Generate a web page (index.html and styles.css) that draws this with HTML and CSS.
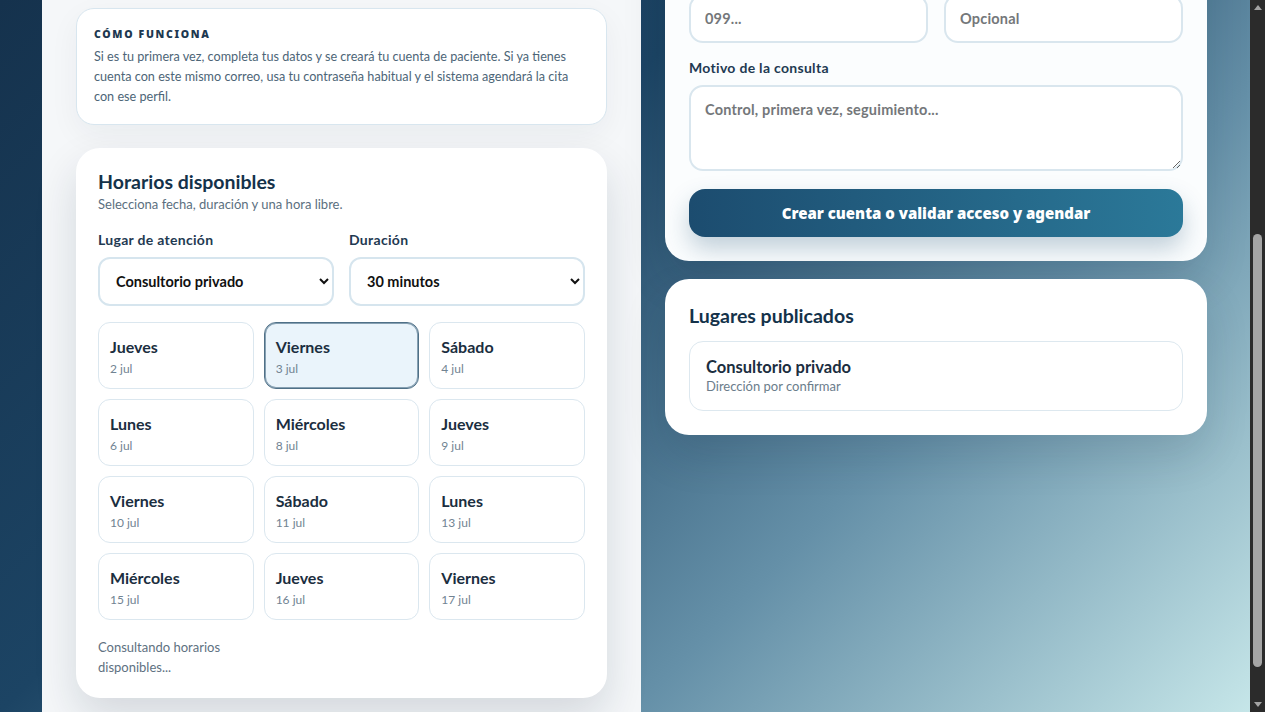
FILE: index.html
```html
<!DOCTYPE html>
<html lang="es">
<head>
<meta charset="utf-8">
<title>Agenda tu consulta</title>
<link rel="stylesheet" href="styles.css">
</head>
<body>
<div class="page" id="page">
<main class="layout">
  <section class="panel">
    <header class="intro">
      <span class="badge">Agenda en línea</span>
      <h1 class="intro-title">Dra. Valentina Suárez</h1>
      <p class="intro-specialty">Medicina general · Montevideo</p>
      <p class="intro-text">Reserva tu consulta en pocos pasos: elige el lugar, la fecha y el horario que mejor te quede.</p>
      <ul class="facts">
        <li class="fact"><strong class="fact-value">30 min</strong><span class="fact-label">Duración habitual</span></li>
        <li class="fact"><strong class="fact-value">1</strong><span class="fact-label">Lugar de atención</span></li>
        <li class="fact"><strong class="fact-value">Online</strong><span class="fact-label">Confirmación</span></li>
      </ul>
      <p class="intro-contact">Atención de lunes a sábado.</p>
    </header>

    <article class="how">
      <h3 class="how-title">Cómo funciona</h3>
      <p class="how-text">Si es tu primera vez, completa tus datos y se creará tu cuenta de paciente. Si ya tienes cuenta con este mismo correo, usa tu contraseña habitual y el sistema agendará la cita con ese perfil.</p>
    </article>

    <article class="card schedule">
      <h2 class="card-title">Horarios disponibles</h2>
      <p class="card-sub">Selecciona fecha, duración y una hora libre.</p>
      <div class="filters">
        <label class="field">
          <span class="field-label">Lugar de atención</span>
          <select class="select"><option>Consultorio privado</option></select>
        </label>
        <label class="field">
          <span class="field-label">Duración</span>
          <select class="select"><option>30 minutos</option><option>45 minutos</option><option>60 minutos</option></select>
        </label>
      </div>
      <div class="days">
        <button class="day" type="button"><span class="day-name">Jueves</span><span class="day-date">2 jul</span></button>
        <button class="day is-selected" type="button"><span class="day-name">Viernes</span><span class="day-date">3 jul</span></button>
        <button class="day" type="button"><span class="day-name">Sábado</span><span class="day-date">4 jul</span></button>
        <button class="day" type="button"><span class="day-name">Lunes</span><span class="day-date">6 jul</span></button>
        <button class="day" type="button"><span class="day-name">Miércoles</span><span class="day-date">8 jul</span></button>
        <button class="day" type="button"><span class="day-name">Jueves</span><span class="day-date">9 jul</span></button>
        <button class="day" type="button"><span class="day-name">Viernes</span><span class="day-date">10 jul</span></button>
        <button class="day" type="button"><span class="day-name">Sábado</span><span class="day-date">11 jul</span></button>
        <button class="day" type="button"><span class="day-name">Lunes</span><span class="day-date">13 jul</span></button>
        <button class="day" type="button"><span class="day-name">Miércoles</span><span class="day-date">15 jul</span></button>
        <button class="day" type="button"><span class="day-name">Jueves</span><span class="day-date">16 jul</span></button>
        <button class="day" type="button"><span class="day-name">Viernes</span><span class="day-date">17 jul</span></button>
      </div>
      <div class="slots">
        <p class="status">Consultando horarios disponibles...</p>
      </div>
    </article>
  </section>

  <aside class="side">
    <form class="card booking">
      <header class="booking-head">
        <h2 class="card-title">Tus datos</h2>
        <p class="card-sub">Completa el formulario para reservar la hora elegida.</p>
        <p class="booking-note">Los datos se guardan en tu ficha de paciente.</p>
      </header>
      <div class="row">
        <label class="field"><span class="field-label">Nombre</span><input class="input" type="text" placeholder="Tu nombre"></label>
        <label class="field"><span class="field-label">Apellido</span><input class="input" type="text" placeholder="Tu apellido"></label>
      </div>
      <div class="row">
        <label class="field"><span class="field-label">Correo electrónico</span><input class="input" type="email" placeholder="nombre@correo.com"></label>
        <label class="field"><span class="field-label">Contraseña</span><input class="input" type="password" placeholder="Mínimo 8 caracteres"></label>
      </div>
      <div class="row">
        <label class="field"><span class="field-label">Teléfono</span><input class="input" type="tel" placeholder="099..."></label>
        <label class="field"><span class="field-label">Mutualista</span><input class="input" type="text" placeholder="Opcional"></label>
      </div>
      <label class="field">
        <span class="field-label">Motivo de la consulta</span>
        <textarea class="textarea" placeholder="Control, primera vez, seguimiento..."></textarea>
      </label>
      <button class="submit" type="button">Crear cuenta o validar acceso y agendar</button>
    </form>

    <section class="card places">
      <h2 class="card-title">Lugares publicados</h2>
      <div class="place">
        <strong class="place-name">Consultorio privado</strong>
        <span class="place-address">Dirección por confirmar</span>
      </div>
    </section>
  </aside>
</main>
</div>

<div class="scrollbar" aria-hidden="true">
  <span class="scrollbar-arrow is-up"></span>
  <div class="scrollbar-track" id="track"><span class="scrollbar-thumb" id="thumb"></span></div>
  <span class="scrollbar-arrow is-down"></span>
</div>
<script src="script.js"></script>
</body>
</html>
```

FILE: styles.css
```css
* {
  box-sizing: border-box;
}

html,
body {
  height: 100%;
}

body {
  margin: 0;
  overflow: hidden;
  display: flex;
  font-family: Lato, "Noto Sans", sans-serif;
  color: #17324a;
  background: linear-gradient(135deg, #15324d 0%, #1c4464 36%, #6590a8 68%, #c8e8ea 100%) fixed;
}

/* Scrolling area; its position is shown by the custom bar on the right */
.page {
  flex: 1;
  min-width: 0;
  height: 100%;
  overflow-y: scroll;
  scrollbar-width: none;
}

.scrollbar {
  flex: 0 0 15px;
  height: 100%;
  background: #2b2b2b;
  display: flex;
  flex-direction: column;
}

.scrollbar-arrow {
  flex: 0 0 15px;
  display: flex;
  align-items: center;
  justify-content: center;
}

.scrollbar-arrow::before {
  content: "";
  border-left: 4px solid transparent;
  border-right: 4px solid transparent;
}

.scrollbar-arrow.is-up::before {
  border-bottom: 5px solid #a3a3a3;
}

.scrollbar-arrow.is-down::before {
  border-top: 5px solid #a3a3a3;
}

.scrollbar-track {
  flex: 1;
  min-height: 0;
}

.scrollbar-thumb {
  display: block;
  width: 9px;
  height: 40px;
  margin: 0 auto;
  border-radius: 5px;
  background: #a5a5a5;
}

.layout {
  width: 1166px;
  margin: 0 auto;
  padding-bottom: 30px;
  display: grid;
  grid-template-columns: 599px 542px;
  gap: 24px;
  align-items: start;
}

/* Left column */
.panel {
  background: #f5f7f9;
  padding: 34px;
  display: flex;
  flex-direction: column;
  gap: 23px;
}

.intro {
  display: flex;
  flex-direction: column;
  align-items: flex-start;
}

.badge {
  height: 28px;
  line-height: 28px;
  padding: 0 12px;
  border-radius: 999px;
  background: #e3eff6;
  color: #1d4e70;
  font-size: 12px;
  font-weight: 700;
  margin-bottom: 24px;
}

.intro-title {
  margin: 0 0 8px;
  font-size: 30px;
  line-height: 38px;
  color: #14324a;
}

.intro-specialty {
  margin: 0 0 18px;
  font-size: 15px;
  line-height: 22px;
  color: #3e5a70;
  font-weight: 700;
}

.intro-text {
  margin: 0 0 26px;
  font-size: 14px;
  line-height: 22px;
  color: #4d6577;
}

.facts {
  list-style: none;
  margin: 0;
  padding: 0;
  align-self: stretch;
  display: grid;
  grid-template-columns: repeat(3, 1fr);
  gap: 10px;
}

.fact {
  background: #fff;
  border: 1px solid #dbe7ef;
  border-radius: 14px;
  padding: 18px 14px;
  display: flex;
  flex-direction: column;
}

.fact-value {
  font-size: 18px;
  line-height: 24px;
  color: #14324a;
}

.fact-label {
  font-size: 12px;
  line-height: 18px;
  color: #6b7d8b;
}

.intro-contact {
  margin: 5px 0 0;
  font-size: 12px;
  line-height: 18px;
  color: #6b7d8b;
}

.how {
  background: #fff;
  border: 1px solid #d8e6ef;
  border-radius: 18px;
  padding: 18px 17px 17px;
  box-shadow: 0 10px 30px rgba(15, 40, 65, 0.05);
}

.how-title {
  margin: 0 0 6px;
  font-family: "Noto Sans", Lato, sans-serif;
  font-size: 10.5px;
  line-height: 14px;
  font-weight: 900;
  letter-spacing: 0.16em;
  text-transform: uppercase;
  color: #1d3850;
}

.how-text {
  margin: 0;
  font-size: 12.65px;
  line-height: 20px;
  color: #4d6577;
}

/* Cards */
.card {
  background: #fff;
  border-radius: 24px;
  padding: 24px;
  box-shadow: 0 20px 44px rgba(12, 34, 56, 0.14);
}

.card-title {
  margin: 0;
  font-size: 19.5px;
  line-height: 26px;
  font-weight: 700;
  color: #14324a;
}

.card-sub {
  margin: 0;
  font-size: 13px;
  line-height: 18px;
  color: #5b6f80;
}

.schedule {
  padding: 21px 22px 21px;
}

.filters {
  margin-top: 18px;
  display: grid;
  grid-template-columns: 1fr 1fr;
  gap: 15px;
}

.field {
  display: flex;
  flex-direction: column;
  gap: 8px;
}

.field-label {
  font-size: 14px;
  line-height: 18px;
  font-weight: 700;
  letter-spacing: 0.3px;
  color: #1f3a52;
}

.select {
  height: 49px;
  border: 2px solid #d6e5ee;
  border-radius: 12px;
  padding: 0 10px 0 12px;
  background-color: #fff;
  font-family: inherit;
  font-size: 14.5px;
  font-weight: 700;
  color: #111;
}

.days {
  margin-top: 16px;
  display: grid;
  grid-template-columns: repeat(3, 1fr);
  gap: 10px;
}

.day {
  display: flex;
  flex-direction: column;
  align-items: flex-start;
  gap: 3px;
  padding: 14px 11px 10px;
  border: 1px solid #dbe7ef;
  border-radius: 12px;
  background: #fff;
  font-family: inherit;
  text-align: left;
  cursor: pointer;
}

.day.is-selected {
  background: #eaf4fb;
  border-color: #4f7087;
  box-shadow: inset 0 0 0 1px #86a0b2;
}

.day-name {
  font-size: 16px;
  line-height: 20px;
  font-weight: 700;
  color: #1b2e40;
}

.day-date {
  font-size: 12px;
  line-height: 18px;
  color: #718392;
}

.slots {
  margin-top: 17px;
  display: grid;
  grid-template-columns: repeat(3, 1fr);
  gap: 10px;
}

.status {
  margin: 0;
  font-size: 13px;
  line-height: 20px;
  color: #5e7181;
}

/* Right column */
.side {
  padding-top: 34px;
  display: flex;
  flex-direction: column;
  gap: 18px;
}

.card.booking {
  display: flex;
  flex-direction: column;
  gap: 16px;
  background: #fbfdfe;
}

.booking-head {
  display: flex;
  flex-direction: column;
}

.booking-note {
  margin: 8px 0 0;
  font-size: 13px;
  line-height: 20px;
  color: #4d6577;
}

.row {
  display: grid;
  grid-template-columns: 1fr 1fr;
  gap: 16px;
}

.input,
.textarea {
  width: 100%;
  border: 2px solid #d9e6ee;
  border-radius: 14px;
  background: #fff;
  font-family: inherit;
  font-size: 14.5px;
  font-weight: 700;
  letter-spacing: 0.2px;
  color: #1b2e40;
}

.input {
  height: 49px;
  padding: 0 14px;
}

.textarea {
  height: 86px;
  padding: 13px 14px;
  line-height: 20px;
  resize: both;
}

.input::placeholder,
.textarea::placeholder {
  color: #74777a;
}

.submit {
  margin-top: 2px;
  height: 48px;
  border: 0;
  border-radius: 16px;
  background: linear-gradient(90deg, #1c4c6f 0%, #2b7999 100%);
  color: #fff;
  font-family: "Noto Sans", Lato, sans-serif;
  font-size: 15px;
  font-weight: 900;
  box-shadow: 0 12px 24px rgba(28, 77, 112, 0.26);
  cursor: pointer;
}

.places .place {
  margin-top: 12px;
  border: 1px solid #dde8ef;
  border-radius: 14px;
  padding: 15px 16px;
  display: flex;
  flex-direction: column;
}

.place-name {
  font-size: 16.5px;
  line-height: 20px;
  color: #1b2e40;
}

.place-address {
  font-size: 13px;
  line-height: 18px;
  color: #6b7d8b;
}
```

FILE: script.js
```js
// Custom scrollbar: keeps the thumb in step with the page scroll position
const page = document.getElementById('page');
const track = document.getElementById('track');
const thumb = document.getElementById('thumb');

function syncThumb() {
  const trackHeight = track.clientHeight;
  const thumbHeight = Math.max(24, Math.round(trackHeight * page.clientHeight / page.scrollHeight));
  const maxScroll = page.scrollHeight - page.clientHeight;
  const offset = maxScroll > 0 ? (page.scrollTop / maxScroll) * (trackHeight - thumbHeight) : 0;
  thumb.style.height = thumbHeight + 'px';
  thumb.style.transform = 'translateY(' + Math.round(offset) + 'px)';
}

page.addEventListener('scroll', syncThumb);
window.addEventListener('resize', syncThumb);

page.scrollTop = 360;
syncThumb();
```
